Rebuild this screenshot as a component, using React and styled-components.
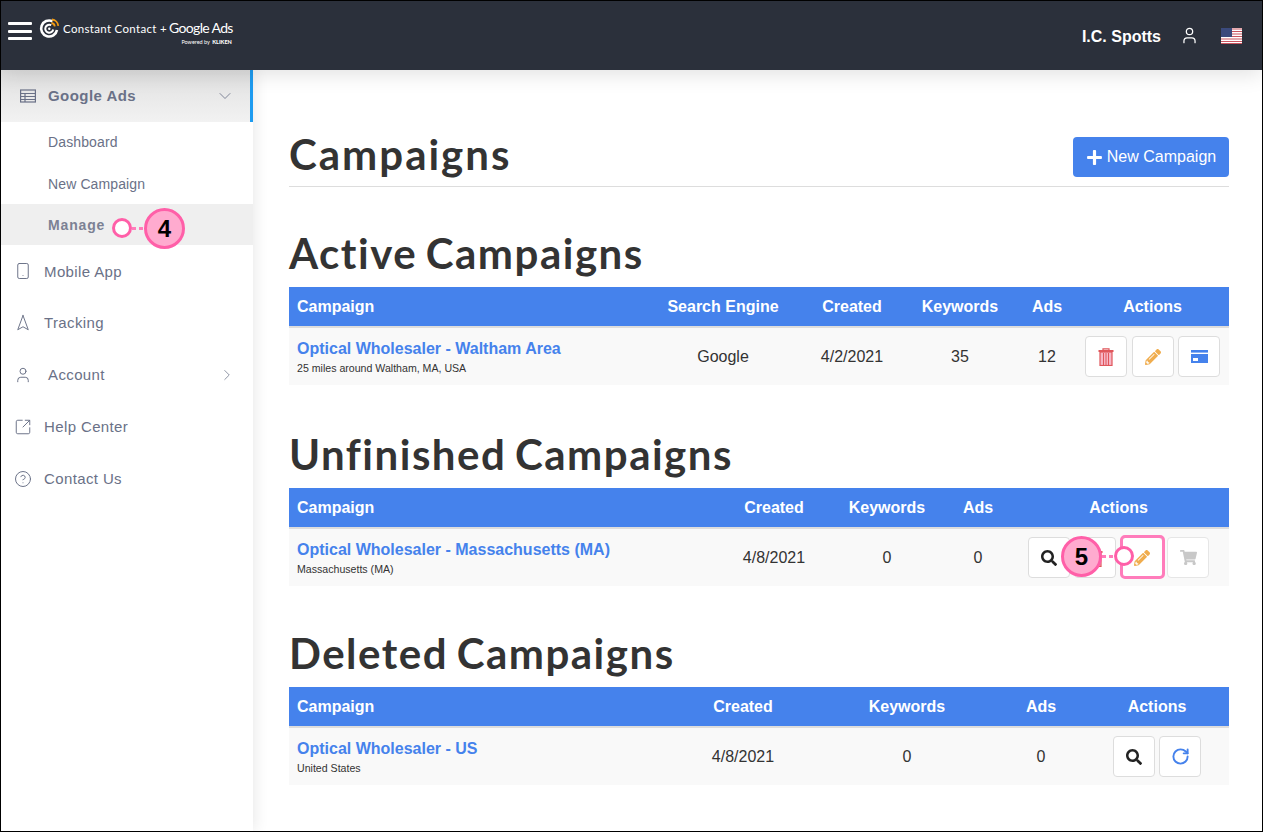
import React from "react";
import styled, { createGlobalStyle } from "styled-components";
import { ChevronDown, ChevronRight, Smartphone, Navigation2, User, SquareArrowOutUpRight, CircleHelp, RotateCw } from "lucide-react";
import { FaPlus, FaSearch, FaPencilAlt, FaShoppingCart } from "react-icons/fa";

const Global = createGlobalStyle`
  * { box-sizing: border-box; }
  html, body { margin: 0; padding: 0; background: #fff; }
  body { font-family: "Liberation Sans", Arial, sans-serif; color: #333; }
`;

const Page = styled.div`
  position: relative; width: 1263px; height: 832px; border: 1px solid #000; overflow: hidden;
  display: flex; flex-direction: column; background: #fff;
`;
const TopBar = styled.header`
  height: 69px; flex: none; background: #2b303b; display: flex; align-items: center;
  padding: 0 20px 0 7px; color: #fff; position: relative; z-index: 3;
  box-shadow: 0 4px 20px rgba(0,0,0,.12);
`;
const Burger = styled.div`
  width: 24px; display: flex; flex-direction: column; gap: 4.5px; margin-bottom: 9px;
  span { display: block; height: 3px; background: #fff; border-radius: 1px; }
`;
const Logo = styled.div`
  display: flex; align-items: flex-start; margin-left: 7px; margin-top: -9px; position: relative;
`;
const LogoText = styled.div`
  display: flex; flex-direction: column; align-items: flex-end; margin-left: 3px; margin-top: 1px; font-family: Lato, sans-serif;
`;
const LogoLine = styled.div`
  display: flex; align-items: baseline; white-space: nowrap; font-size: 11.5px; font-weight: 400; line-height: 18px; letter-spacing: .32px;
  em { font-style: normal; font-weight: 400; font-size: 14px; margin-left: 2px; letter-spacing: -.65px; }
`;
const Powered = styled.div`
  font-size: 5.5px; line-height: 6px; margin-top: 1px; margin-right: 1px; white-space: nowrap;
  b { font-weight: 900; margin-left: 1px; }
`;
const UserArea = styled.div`
  margin-left: auto; display: flex; align-items: center;
`;
const UserName = styled.span`
  font-size: 16px; font-weight: 700; margin-right: 19px; position: relative; top: 1px;
`;
const Flag = styled.svg`
  width: 21px; height: 16px; margin-left: 22px; display: block;
`;
const Layout = styled.div`
  flex: 1; display: flex; min-height: 0;
`;
const Sidebar = styled.nav`
  width: 252px; flex: none; background: #fff; position: relative; z-index: 2;
  box-shadow: 2px 0 14px rgba(0,0,0,.09);
`;
const SectionHead = styled.div`
  height: 52px; display: flex; align-items: center; padding: 0 15px 0 19px; color: #6a7187;
  background: linear-gradient(#e0e0e0, #f2f2f2); border-right: 3px solid #1d9bf0;
  font-size: 15px; font-weight: 700; letter-spacing: .45px;
  span { margin-left: 12px; position: relative; top: -1px; flex: 1; }
`;
const SubItem = styled.div`
  height: 41px; display: flex; align-items: center; padding: 0 0 ${p => (p.$raised ? 1 : 0)}px 47px; font-size: 14px;
  background: ${p => (p.$active ? "#efefef" : "#fff")};
  font-weight: ${p => (p.$active ? 700 : 400)};
  color: ${p => (p.$active ? "#7c8194" : "#6a7187")};
  letter-spacing: ${p => (p.$active ? ".85px" : ".12px")};
`;
const NavItem = styled.div`
  height: 52px; display: flex; align-items: center; padding: 0 17px 0 13px; font-size: 15px;
  color: #6a7187; letter-spacing: .38px;
  span { margin-left: ${p => p.$indent || 12}px; flex: 1; position: relative; top: ${p => (p.$level ? 0 : -1)}px; }
`;
const Main = styled.main`
  flex: 1; padding: 67px 33px 0 36px; min-width: 0;
`;
const TitleRow = styled.div`
  display: flex; justify-content: space-between; align-items: flex-start; height: 50px;
  border-bottom: 1px solid #ddd;
`;
const Title = styled.h1`
  margin: 0; font-family: Lato, sans-serif; font-size: 42px; line-height: 34px; font-weight: 700; color: #333;
  letter-spacing: 2px;
`;
const NewButton = styled.div`
  height: 40px; width: 156px; background: #4582ec; color: #fff; border-radius: 4px; font-size: 16px;
  display: flex; align-items: center; justify-content: center; gap: 4px;
`;
const Section = styled.section`
  margin-top: ${p => p.$top}px;
`;
const Heading = styled.h2`
  margin: 0 0 11px; font-family: Lato, sans-serif; font-size: 42px; line-height: 43px; height: 44px; font-weight: 700; color: #333;
  letter-spacing: 1.5px; word-spacing: -3px;
`;
const Grid = styled.div`
  display: grid; grid-template-columns: ${p => p.$cols}; align-items: center;
`;
const HeadRow = styled(Grid)`
  height: 41px; background: #4582ec; border-bottom: 2px solid #ddd; color: #fff; font-weight: 700; font-size: 16px;
`;
const Row = styled(Grid)`
  height: 57px; background: #f9f9f9; font-size: 16px;
`;
const Cell = styled.div`
  padding: 0 8px; text-align: ${p => (p.$left ? "left" : "center")};
`;
const CampaignLink = styled.div`
  color: #4582ec; font-weight: 700; font-size: 16px; line-height: 18px;
`;
const Sub = styled.div`
  font-size: 10.6px; line-height: 12px; margin-top: 4px; color: #333;
`;
const Actions = styled.div`
  display: flex; justify-content: center; gap: 4.5px;
`;
const ActionButton = styled.div`
  width: 42px; height: 41px; background: #fff; border: 1px solid ${p => (p.$disabled ? "#e6e6e6" : "#ddd")}; border-radius: 4px;
  display: flex; align-items: center; justify-content: center; color: ${p => p.$color || "#333"};
`;
const Highlight = styled.div`
  position: absolute; left: 1119px; top: 534px; width: 45px; height: 44px;
  border: 3px solid #ff7cbb; border-radius: 5px; z-index: 5;
`;
const Callout = styled.div`
  position: absolute; left: ${p => p.$x}px; top: ${p => p.$y}px; z-index: 6; display: flex; align-items: center;
`;
const Ring = styled.div`
  width: 20px; height: 20px; border-radius: 50%; background: #fff; border: 3px solid #ff5fa8; flex: none;
  position: relative; top: -1px;
`;
const Dots = styled.div`
  width: ${p => p.$w}px; height: 3px; flex: none;
  background: repeating-linear-gradient(90deg, #ff7cbb 0 4px, transparent 4px 7px);
`;
const Badge = styled.div`
  width: 41px; height: 41px; border-radius: 50%; flex: none; background: #ffabcf; border: 3px solid #ff5fa8;
  color: #000; font-size: 24px; font-weight: 700; display: flex; align-items: center; justify-content: center;
`;

const TableIcon = () => (
  <svg width="16" height="14" viewBox="0 0 16 14" fill="none" stroke="#6a7187" strokeWidth="1.2">
    <rect x=".6" y="1" width="14.8" height="12" />
    <path d="M.6 4.5h14.8M.6 7.5h14.8M.6 10.5h14.8M5 4.5V13" />
  </svg>
);
const Mark = () => (
  <svg width="21" height="21" viewBox="0 0 21 21" fill="none">
    <path d="M13.5 3.2A8 8 0 1 0 18 12" stroke="#fff" strokeWidth="2.6" />
    <path d="M12.2 7.2A4 4 0 1 0 14.2 11.5" stroke="#fff" strokeWidth="2" />
    <circle cx="10.3" cy="10.8" r="1.2" fill="#fff" />
    <path d="M13 1.500a7 7 0 0 1 6.300 6.300M12.500 5a4 4 0 0 1 3.300 3.300" stroke="#f39c12" strokeWidth="1.8" />
  </svg>
);
const Trash = () => (
  <svg width="16" height="18" viewBox="0 0 16 18">
    <path d="M5 2V.8h6V2" fill="none" stroke="#e0565b" strokeWidth="1.2" />
    <rect x=".5" y="2" width="15" height="2" fill="#e0565b" />
    <rect x="2" y="4" width="12" height="13.5" fill="#f7b6c6" stroke="#e0565b" strokeWidth="1.2" />
    <path d="M5.500 5v12M8 5v12M10.500 5v12" stroke="#e0565b" strokeWidth="1" />
  </svg>
);
const Card = () => (
  <svg width="17" height="13" viewBox="0 0 17 13">
    <rect width="17" height="13" fill="#4582ec" />
    <rect y="2.6" width="17" height="1.4" fill="#fff" />
    <rect x="2" y="8" width="5" height="3" fill="#fff" />
  </svg>
);

const Pencil = () => <FaPencilAlt size={16} color="#f0ad4e" />;
const Search = () => <FaSearch size={16} color="#222" />;

const TableBlock = ({ cols, head, link, sub, values, actions }) => (
  <>
    <HeadRow $cols={cols}>
      {head.map((h, i) => (
        <Cell key={h} $left={i === 0}>{h}</Cell>
      ))}
    </HeadRow>
    <Row $cols={cols}>
      <Cell $left>
        <CampaignLink>{link}</CampaignLink>
        <Sub>{sub}</Sub>
      </Cell>
      {values.map((v, i) => (
        <Cell key={i}>{v}</Cell>
      ))}
      <Cell>
        <Actions>{actions}</Actions>
      </Cell>
    </Row>
  </>
);

export default function App() {
  return (
    <Page>
      <Global />
      <TopBar>
        <Burger><span /><span /><span /></Burger>
        <Logo>
          <Mark />
          <LogoText>
            <LogoLine>Constant Contact +<em>Google Ads</em></LogoLine>
            <Powered>Powered by <b>KLIKEN</b></Powered>
          </LogoText>
        </Logo>
        <UserArea>
          <UserName>I.C. Spotts</UserName>
          <User size={19} strokeWidth={1.6} />
          <Flag viewBox="0 0 21 16">
            <rect width="21" height="16" fill="#fff" />
            <path d="M0 1h21M0 3.500h21M0 6h21M0 8.500h21M0 11h21M0 13.500h21M0 15.500h21" stroke="#c9545f" strokeWidth="1.2" />
            <rect width="11" height="9" fill="#3b4a7c" />
          </Flag>
        </UserArea>
      </TopBar>
      <Layout>
        <Sidebar>
          <SectionHead>
            <TableIcon />
            <span>Google Ads</span>
            <ChevronDown size={20} strokeWidth={1} />
          </SectionHead>
          <SubItem $raised>Dashboard</SubItem>
          <SubItem>New Campaign</SubItem>
          <SubItem $active>Manage</SubItem>
          <NavItem $level><Smartphone size={18} strokeWidth={1.3} /><span>Mobile App</span></NavItem>
          <NavItem><Navigation2 size={18} strokeWidth={1.3} /><span>Tracking</span></NavItem>
          <NavItem $indent={16}><User size={18} strokeWidth={1.3} /><span>Account</span><ChevronRight size={18} strokeWidth={1} /></NavItem>
          <NavItem><SquareArrowOutUpRight size={18} strokeWidth={1.3} /><span>Help Center</span></NavItem>
          <NavItem><CircleHelp size={18} strokeWidth={1.3} /><span>Contact Us</span></NavItem>
        </Sidebar>
        <Main>
          <TitleRow>
            <Title>Campaigns</Title>
            <NewButton><FaPlus size={17} />New Campaign</NewButton>
          </TitleRow>
          <Section $top={45}>
            <Heading>Active Campaigns</Heading>
            <TableBlock
              cols="356px 156px 102px 114px 60px 151px"
              head={["Campaign", "Search Engine", "Created", "Keywords", "Ads", "Actions"]}
              link="Optical Wholesaler - Waltham Area"
              sub="25 miles around Waltham, MA, USA"
              values={["Google", "4/2/2021", "35", "12"]}
              actions={<>
                <ActionButton><Trash /></ActionButton>
                <ActionButton><Pencil /></ActionButton>
                <ActionButton><Card /></ActionButton>
              </>}
            />
          </Section>
          <Section $top={48}>
            <Heading>Unfinished Campaigns</Heading>
            <TableBlock
              cols="433px 104px 122px 60px 221px"
              head={["Campaign", "Created", "Keywords", "Ads", "Actions"]}
              link="Optical Wholesaler - Massachusetts (MA)"
              sub="Massachusetts (MA)"
              values={["4/8/2021", "0", "0"]}
              actions={<>
                <ActionButton><Search /></ActionButton>
                <ActionButton><Trash /></ActionButton>
                <ActionButton><Pencil /></ActionButton>
                <ActionButton $disabled><FaShoppingCart size={17} color="#c8c8c8" /></ActionButton>
              </>}
            />
          </Section>
          <Section $top={46}>
            <Heading>Deleted Campaigns</Heading>
            <TableBlock
              cols="380px 148px 180px 88px 144px"
              head={["Campaign", "Created", "Keywords", "Ads", "Actions"]}
              link="Optical Wholesaler - US"
              sub="United States"
              values={["4/8/2021", "0", "0"]}
              actions={<>
                <ActionButton><Search /></ActionButton>
                <ActionButton><RotateCw size={19} strokeWidth={2.4} color="#4582ec" /></ActionButton>
              </>}
            />
          </Section>
        </Main>
      </Layout>
      <Highlight />
      <Callout $x={111} $y={207}><Ring /><Dots $w={12} /><Badge>4</Badge></Callout>
      <Callout $x={1060} $y={535}><Badge>5</Badge><Dots $w={12} /><Ring /></Callout>
    </Page>
  );
}
